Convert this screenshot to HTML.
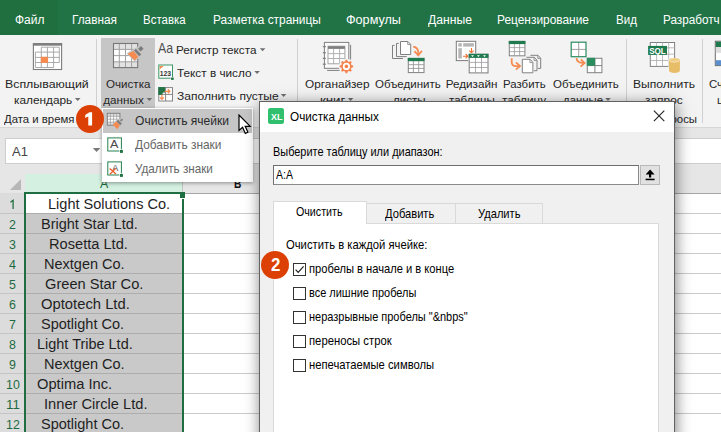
<!DOCTYPE html>
<html><head><meta charset="utf-8"><title>Excel</title>
<style>
*{box-sizing:border-box;margin:0;padding:0}
html,body{width:721px;height:432px;overflow:hidden;background:#fff}
body{font-family:"Liberation Sans",sans-serif;position:relative}
.abs{position:absolute}
.t{position:absolute;white-space:pre;line-height:1;transform-origin:0 0;display:block}
</style></head><body>
<div class="abs" style="left:0;top:0;width:721px;height:35px;background:#217346"></div><div class="abs" style="left:0;top:0;width:58px;height:35px;background:#20703f"></div><span class="t" style="left:14.53px;top:14.00px;font-size:12.30px;color:#fff;transform:scaleX(0.9724);">Файл</span><span class="t" style="left:72.34px;top:14.00px;font-size:12.30px;color:#fff;transform:scaleX(0.9600);">Главная</span><span class="t" style="left:143.37px;top:14.00px;font-size:12.30px;color:#fff;transform:scaleX(0.9333);">Вставка</span><span class="t" style="left:212.73px;top:14.00px;font-size:12.30px;color:#fff;transform:scaleX(0.9664);">Разметка страницы</span><span class="t" style="left:346.27px;top:14.00px;font-size:12.30px;color:#fff;transform:scaleX(1.0269);">Формулы</span><span class="t" style="left:428.00px;top:14.00px;font-size:12.30px;color:#fff;transform:scaleX(0.9886);">Данные</span><span class="t" style="left:497.43px;top:14.00px;font-size:12.30px;color:#fff;transform:scaleX(0.9681);">Рецензирование</span><span class="t" style="left:615.56px;top:14.00px;font-size:12.30px;color:#fff;transform:scaleX(0.9381);">Вид</span><span class="t" style="left:662.65px;top:14.00px;font-size:12.30px;color:#fff;transform:scaleX(0.9517);">Разработч</span><div class="abs" style="left:0;top:35px;width:721px;height:92px;background:#f3f3f3"></div><div class="abs" style="left:0;top:127px;width:721px;height:1px;background:#d6d6d6"></div><div class="abs" style="left:101px;top:38px;width:53.5px;height:70px;background:#c6c6c6"></div><div class="abs" style="left:96px;top:39px;height:84px;width:1px;background:#d0d0d0"></div><div class="abs" style="left:297px;top:39px;height:84px;width:1px;background:#d0d0d0"></div><div class="abs" style="left:626px;top:39px;height:84px;width:1px;background:#d0d0d0"></div><div class="abs" style="left:702px;top:39px;height:84px;width:1px;background:#d0d0d0"></div><span class="t" style="left:5.34px;top:78.00px;font-size:11.70px;color:#262626;transform:scaleX(1.0577);">Всплывающий</span><span class="t" style="left:14.29px;top:94.00px;font-size:11.70px;color:#262626;transform:scaleX(1.0125);">календарь</span><span class="t" style="left:4.20px;top:113.00px;font-size:11.70px;color:#262626;transform:scaleX(0.9722);">Дата и время</span><span class="t" style="left:106.00px;top:78.00px;font-size:11.70px;color:#262626;transform:scaleX(0.9933);">Очистка</span><span class="t" style="left:103.30px;top:94.00px;font-size:11.70px;color:#262626;transform:scaleX(1.0000);">данных</span><span class="t" style="left:176.29px;top:44.00px;font-size:11.70px;color:#262626;transform:scaleX(1.0051);">Регистр текста</span><span class="t" style="left:177.30px;top:67.00px;font-size:11.70px;color:#262626;transform:scaleX(1.0068);">Текст в число</span><span class="t" style="left:177.30px;top:90.00px;font-size:11.70px;color:#262626;transform:scaleX(1.0296);">Заполнить пустые</span><span class="t" style="left:304.60px;top:78.00px;font-size:11.70px;color:#262626;transform:scaleX(1.0111);">Органайзер</span><span class="t" style="left:320.07px;top:94.00px;font-size:11.70px;color:#262626;transform:scaleX(1.1333);">книг</span><span class="t" style="left:374.60px;top:78.00px;font-size:11.70px;color:#262626;transform:scaleX(0.9851);">Объединить</span><span class="t" style="left:392.80px;top:94.00px;font-size:11.70px;color:#262626;transform:scaleX(0.9844);">листы</span><span class="t" style="left:445.70px;top:78.00px;font-size:11.70px;color:#262626;transform:scaleX(1.0000);">Редизайн</span><span class="t" style="left:448.90px;top:94.00px;font-size:11.70px;color:#262626;transform:scaleX(0.9891);">таблицы</span><span class="t" style="left:502.82px;top:78.00px;font-size:11.70px;color:#262626;transform:scaleX(0.9786);">Разбить</span><span class="t" style="left:502.20px;top:94.00px;font-size:11.70px;color:#262626;transform:scaleX(1.0114);">таблицу</span><span class="t" style="left:552.70px;top:78.00px;font-size:11.70px;color:#262626;transform:scaleX(0.9866);">Объединить</span><span class="t" style="left:563.00px;top:94.00px;font-size:11.70px;color:#262626;transform:scaleX(0.9756);">данные</span><span class="t" style="left:632.86px;top:78.00px;font-size:11.70px;color:#262626;transform:scaleX(1.0356);">Выполнить</span><span class="t" style="left:645.00px;top:94.00px;font-size:11.70px;color:#262626;transform:scaleX(1.0216);">запрос</span><span class="t" style="left:650.91px;top:113.00px;font-size:11.70px;color:#262626;transform:scaleX(0.9778);">Запросы</span><span class="t" style="left:709.40px;top:78.00px;font-size:11.70px;color:#262626;transform:scaleX(0.9778);">Счетчик</span><span class="t" style="left:716.50px;top:94.00px;font-size:11.70px;color:#262626;transform:scaleX(0.9778);">цвета</span><span class="t" style="left:158.40px;top:41.00px;font-size:14.50px;color:#505050;transform:scaleX(0.8500);">Aa</span><svg class="abs" style="left:73px;top:96px" width="12" height="8" viewBox="0 0 12 8"><path d="M1.90 1.90 h5.60 l-2.80 3.10 Z" fill="#6e6e6e"/></svg><svg class="abs" style="left:145px;top:96px" width="12" height="8" viewBox="0 0 12 8"><path d="M1.60 1.90 h5.60 l-2.80 3.10 Z" fill="#6e6e6e"/></svg><svg class="abs" style="left:258px;top:47px" width="12" height="8" viewBox="0 0 12 8"><path d="M1.80 1.20 h5.60 l-2.80 3.10 Z" fill="#6e6e6e"/></svg><svg class="abs" style="left:253px;top:70px" width="12" height="8" viewBox="0 0 12 8"><path d="M1.30 1.00 h5.60 l-2.80 3.10 Z" fill="#6e6e6e"/></svg><svg class="abs" style="left:279px;top:92px" width="12" height="8" viewBox="0 0 12 8"><path d="M1.80 1.90 h5.60 l-2.80 3.10 Z" fill="#6e6e6e"/></svg><svg class="abs" style="left:346px;top:96px" width="12" height="8" viewBox="0 0 12 8"><path d="M1.80 1.90 h5.60 l-2.80 3.10 Z" fill="#6e6e6e"/></svg><svg class="abs" style="left:604px;top:96px" width="12" height="8" viewBox="0 0 12 8"><path d="M1.20 1.90 h5.60 l-2.80 3.10 Z" fill="#6e6e6e"/></svg><svg class="abs" style="left:0;top:0" width="721" height="128" viewBox="0 0 721 128"><rect x="33.40" y="43.60" width="28.20" height="25.90" fill="#fff" stroke="#7c7c7c" stroke-width="1.1" /><rect x="32.90" y="43.10" width="29.20" height="2.60" fill="#7f7f7f" /><path d="M41.30 47.20L41.30 67.50" stroke="#a2a2a2" stroke-width="0.9" fill="none"/><path d="M47.40 47.20L47.40 67.50" stroke="#a2a2a2" stroke-width="0.9" fill="none"/><path d="M53.60 47.20L53.60 67.50" stroke="#a2a2a2" stroke-width="0.9" fill="none"/><path d="M35.40 52.10L35.40 67.50" stroke="#a2a2a2" stroke-width="0.9" fill="none"/><path d="M59.30 47.20L59.30 62.50" stroke="#a2a2a2" stroke-width="0.9" fill="none"/><path d="M41.30 47.20L59.30 47.20" stroke="#a2a2a2" stroke-width="0.9" fill="none"/><path d="M35.40 52.10L59.30 52.10" stroke="#a2a2a2" stroke-width="0.9" fill="none"/><path d="M35.40 57.40L59.30 57.40" stroke="#a2a2a2" stroke-width="0.9" fill="none"/><path d="M35.40 62.50L59.30 62.50" stroke="#a2a2a2" stroke-width="0.9" fill="none"/><path d="M35.40 67.50L53.60 67.50" stroke="#a2a2a2" stroke-width="0.9" fill="none"/><rect x="40.80" y="56.80" width="7.30" height="6.10" fill="#f58b50" /><rect x="113.50" y="43.50" width="24.20" height="24.10" fill="#fff" /><rect x="113.50" y="43.50" width="24.20" height="5.90" fill="#e2e2e2" /><rect x="113.50" y="61.80" width="24.20" height="5.80" fill="#e2e2e2" /><path d="M119.30 43.50L119.30 67.60" stroke="#a2a2a2" stroke-width="1" fill="none"/><path d="M125.50 43.50L125.50 67.60" stroke="#a2a2a2" stroke-width="1" fill="none"/><path d="M131.60 43.50L131.60 67.60" stroke="#a2a2a2" stroke-width="1" fill="none"/><path d="M113.50 49.40L137.70 49.40" stroke="#a2a2a2" stroke-width="1" fill="none"/><path d="M113.50 55.60L137.70 55.60" stroke="#a2a2a2" stroke-width="1" fill="none"/><path d="M113.50 61.80L137.70 61.80" stroke="#a2a2a2" stroke-width="1" fill="none"/><rect x="113.50" y="43.50" width="24.20" height="24.10" fill="none" stroke="#777" stroke-width="1.1" /><path d="M126.6 53.6 L135.9 47.4 L141 45.2 L144.4 48.8 L142 52 L142.6 55 L134.8 61.6 Z" fill="#c6c6c6" /><path d="M127.70 53.80 L133.50 51.00 L138.30 56.90 L134.50 60.20Z" fill="#f58b50" /><path d="M133.90 50.50 L135.90 48.80 L141.30 54.40 L139.10 56.20Z" fill="#7d7d7d" /><path d="M138.00 48.80 L141.00 46.00 L143.60 48.70 L140.60 51.50Z" fill="#7c7c7c" /><rect x="158.80" y="65.00" width="13.70" height="13.20" fill="#fff" stroke="#3a9666" stroke-width="1" /><path d="M159.6 66 H163.8 L159.6 69.6Z" fill="#f58b50" /><text x="159.7" y="76.2" font-family="Liberation Sans,sans-serif" font-weight="bold" font-size="6.3" fill="#333" textLength="11.4" lengthAdjust="spacingAndGlyphs">123</text><rect x="170.60" y="77.00" width="3.40" height="3.20" fill="#f3f3f3" /><rect x="171.10" y="77.50" width="2.60" height="2.40" fill="#217346" /><rect x="158.80" y="87.60" width="13.70" height="13.40" fill="#fff" stroke="#858585" stroke-width="1" /><path d="M165.60 87.60L165.60 101.00" stroke="#858585" stroke-width="1" fill="none"/><path d="M158.80 94.40L172.50 94.40" stroke="#858585" stroke-width="1" fill="none"/><rect x="158.30" y="87.10" width="6.80" height="5.50" fill="#217346" /><rect x="158.30" y="92.00" width="4.30" height="2.90" fill="#217346" /><path d="M164.6 91.3 H169.6 M167.8 89.3 L169.9 91.3 L167.8 93.3" fill="none" stroke="#f58b50" stroke-width="1.2" /><path d="M161.9 94.6 V99.2 M159.9 97.4 L161.9 99.5 L163.9 97.4" fill="none" stroke="#f58b50" stroke-width="1.2" /><path d="M327.10 70.40L339.60 70.40" stroke="#808080" stroke-width="1" fill="none"/><path d="M350.60 44.80L350.60 59.60" stroke="#808080" stroke-width="1" fill="none"/><rect x="324.40" y="42.40" width="24.40" height="25.90" fill="#fafafa" stroke="#808080" stroke-width="1" /><path d="M322.80 46.60L325.90 46.60" stroke="#808080" stroke-width="1.2" fill="none"/><path d="M322.80 52.70L325.90 52.70" stroke="#808080" stroke-width="1.2" fill="none"/><path d="M322.80 58.40L325.90 58.40" stroke="#808080" stroke-width="1.2" fill="none"/><path d="M322.80 64.20L325.90 64.20" stroke="#808080" stroke-width="1.2" fill="none"/><rect x="328.00" y="46.20" width="16.90" height="17.60" fill="#fff" stroke="#999" stroke-width="0.9" /><rect x="328.00" y="46.20" width="16.90" height="2.70" fill="#7f7f7f" /><path d="M333.60 48.90L333.60 63.80" stroke="#aaa" stroke-width="0.9" fill="none"/><path d="M339.60 48.90L339.60 63.80" stroke="#aaa" stroke-width="0.9" fill="none"/><path d="M328.00 53.60L344.90 53.60" stroke="#aaa" stroke-width="0.9" fill="none"/><path d="M328.00 58.50L344.90 58.50" stroke="#aaa" stroke-width="0.9" fill="none"/><circle cx="346.4" cy="66.4" r="7.6" fill="#f3f3f3"/><path d="M345.24 61.23 L345.52 59.66 L347.28 59.66 L347.56 61.23 L349.24 61.92 L350.54 61.01 L351.79 62.26 L350.88 63.56 L351.57 65.24 L353.14 65.52 L353.14 67.28 L351.57 67.56 L350.88 69.24 L351.79 70.54 L350.54 71.79 L349.24 70.88 L347.56 71.57 L347.28 73.14 L345.52 73.14 L345.24 71.57 L343.56 70.88 L342.26 71.79 L341.01 70.54 L341.92 69.24 L341.23 67.56 L339.66 67.28 L339.66 65.52 L341.23 65.24 L341.92 63.56 L341.01 62.26 L342.26 61.01 L343.56 61.92Z" fill="#f4814a" /><circle cx="346.4" cy="66.4" r="3.6" fill="#fff"/><circle cx="346.4" cy="66.4" r="1.8" fill="#f4814a"/><path d="M394.6 45.4 H392.5 V58.5 H403" fill="none" stroke="#808080" stroke-width="1" /><path d="M398.8 43.4 H396.5 V56.6 H406.7" fill="none" stroke="#808080" stroke-width="1" /><path d="M400.5 41.5 H407.9 L410.7 44.3 V54.5 H400.5Z" fill="#fff" stroke="#808080" stroke-width="1" /><path d="M407.7 41.7 V44.5 H410.5" fill="none" stroke="#808080" stroke-width="0.8" /><path d="M413.2 46.6 C417 47 418.6 50 418.3 54.6" fill="none" stroke="#f58b50" stroke-width="1.8" /><path d="M414.4 51.2 L418.3 55.4 L421.9 50.8" fill="none" stroke="#f58b50" stroke-width="1.8" /><rect x="407.60" y="57.50" width="17.10" height="15.80" fill="#f3f3f3" /><rect x="408.30" y="58.40" width="15.70" height="14.20" fill="#fff" stroke="#808080" stroke-width="1" /><path d="M413.40 58.40L413.40 72.60" stroke="#8c8c8c" stroke-width="0.8" fill="none"/><path d="M418.70 58.40L418.70 72.60" stroke="#8c8c8c" stroke-width="0.8" fill="none"/><path d="M408.30 64.70L424.00 64.70" stroke="#8c8c8c" stroke-width="0.8" fill="none"/><path d="M408.30 68.40L424.00 68.40" stroke="#8c8c8c" stroke-width="0.8" fill="none"/><rect x="407.80" y="57.90" width="16.70" height="3.30" fill="#1f7a4d" /><rect x="456.30" y="41.30" width="19.40" height="19.30" fill="#fff" stroke="#7a7a7a" stroke-width="1" /><rect x="458.30" y="43.20" width="3.50" height="3.40" fill="#b5b5b5" /><rect x="463.20" y="43.20" width="10.70" height="3.40" fill="#b5b5b5" /><rect x="458.30" y="48.20" width="3.50" height="10.30" fill="#b5b5b5" /><path d="M471.5 48 V52.3 M469.3 50.6 L471.5 52.8 L473.7 50.6" fill="none" stroke="#f07030" stroke-width="1.1" /><path d="M463 56.2 H467.4 M465.6 54 L467.9 56.2 L465.6 58.4" fill="none" stroke="#f07030" stroke-width="1.1" /><rect x="468.20" y="53.40" width="20.60" height="20.20" fill="#f3f3f3" /><rect x="469.20" y="54.30" width="18.80" height="18.60" fill="#fff" stroke="#7a7a7a" stroke-width="1" /><path d="M475.50 54.30L475.50 72.90" stroke="#9a9a9a" stroke-width="0.8" fill="none"/><path d="M481.50 54.30L481.50 72.90" stroke="#9a9a9a" stroke-width="0.8" fill="none"/><path d="M469.20 62.40L488.00 62.40" stroke="#9a9a9a" stroke-width="0.8" fill="none"/><path d="M469.20 67.50L488.00 67.50" stroke="#9a9a9a" stroke-width="0.8" fill="none"/><rect x="468.70" y="53.80" width="19.80" height="4.10" fill="#1f7a4d" /><path d="M471.0 55.2 H474.0 L472.5 56.9Z" fill="#fff" /><path d="M476.9 55.2 H479.9 L478.4 56.9Z" fill="#fff" /><path d="M483.0 55.2 H486.0 L484.5 56.9Z" fill="#fff" /><rect x="509.30" y="41.40" width="15.60" height="14.40" fill="#fff" stroke="#808080" stroke-width="1" /><path d="M514.40 41.40L514.40 55.80" stroke="#999" stroke-width="0.8" fill="none"/><path d="M519.60 41.40L519.60 55.80" stroke="#999" stroke-width="0.8" fill="none"/><path d="M509.30 47.60L524.90 47.60" stroke="#999" stroke-width="0.8" fill="none"/><path d="M509.30 51.60L524.90 51.60" stroke="#999" stroke-width="0.8" fill="none"/><rect x="508.80" y="40.90" width="16.60" height="3.20" fill="#1f7a4d" /><path d="M511.7 58.2 V62 C511.7 65 513.5 66.1 516 66.1 H519" fill="none" stroke="#f58b50" stroke-width="1.8" /><path d="M515.9 62.4 L520 66.1 L515.9 69.6" fill="none" stroke="#f58b50" stroke-width="1.8" /><path d="M530.4 55.3 H538 L540.7 58.2 V68.4 H538" fill="none" stroke="#808080" stroke-width="1" /><path d="M537.8 55.5 V58.4 H540.5" fill="none" stroke="#808080" stroke-width="0.8" /><path d="M526.4 57.3 H534.3 L537 60.3 V70.7 H534" fill="none" stroke="#808080" stroke-width="1" /><path d="M534.1 57.5 V60.5 H536.8" fill="none" stroke="#808080" stroke-width="0.8" /><path d="M522.3 59.3 H530.1 L532.9 62.4 V72.8 H522.3Z" fill="#fff" stroke="#808080" stroke-width="1" /><path d="M529.9 59.5 V62.6 H532.7" fill="none" stroke="#808080" stroke-width="0.8" /><rect x="571.20" y="42.20" width="14.80" height="14.50" fill="#fff" /><path d="M578.70 42.20L578.70 56.70" stroke="#a0a0a0" stroke-width="1" fill="none"/><path d="M571.20 49.40L586.00 49.40" stroke="#a0a0a0" stroke-width="1" fill="none"/><rect x="571.20" y="42.20" width="14.80" height="14.50" fill="none" stroke="#2a8c5f" stroke-width="1.2" /><path d="M576.6 58 C576.6 61.5 579 62.9 583.4 62.9" fill="none" stroke="#f58b50" stroke-width="1.8" /><path d="M580.8 59.4 L584.6 63 L580.6 66.6" fill="none" stroke="#f58b50" stroke-width="1.8" /><rect x="587.30" y="58.30" width="14.60" height="14.40" fill="#fff" stroke="#808080" stroke-width="1" /><path d="M594.90 58.30L594.90 72.70" stroke="#808080" stroke-width="1" fill="none"/><path d="M587.30 65.60L601.90 65.60" stroke="#808080" stroke-width="1" fill="none"/><rect x="586.80" y="57.80" width="8.30" height="8.00" fill="#2a8c5f" /><rect x="650.30" y="42.50" width="24.30" height="23.90" fill="#fff" stroke="#808080" stroke-width="1" /><path d="M656.60 42.50L656.60 66.40" stroke="#a8a8a8" stroke-width="0.8" fill="none"/><path d="M662.50 42.50L662.50 66.40" stroke="#a8a8a8" stroke-width="0.8" fill="none"/><path d="M668.70 42.50L668.70 66.40" stroke="#a8a8a8" stroke-width="0.8" fill="none"/><path d="M650.30 47.80L674.60 47.80" stroke="#a8a8a8" stroke-width="0.8" fill="none"/><path d="M650.30 54.20L674.60 54.20" stroke="#a8a8a8" stroke-width="0.8" fill="none"/><path d="M650.30 60.50L674.60 60.50" stroke="#a8a8a8" stroke-width="0.8" fill="none"/><rect x="648.10" y="45.90" width="18.90" height="9.00" fill="#1f7a4d" /><text x="649.2" y="53.9" font-family="Liberation Sans,sans-serif" font-weight="bold" font-size="9.4" fill="#fff" textLength="16.6" lengthAdjust="spacingAndGlyphs">SQL</text><path d="M668.4 59 V71 A5.9 2.2 0 0 0 680.4 71 V59Z" fill="#f3f3f3" /><path d="M669 60 V70.8 A5.45 2.1 0 0 0 679.9 70.8 V60Z" fill="#e7bd67" /><ellipse cx="674.45" cy="60" rx="5.45" ry="2.1" fill="#efcd84"/><path d="M669.2 60.4 A5.3 2 0 0 0 679.7 60.4" fill="none" stroke="#fbefd4" stroke-width="0.7" /><rect x="715.30" y="41.20" width="14.70" height="24.40" fill="#fff" stroke="#6a6a6a" stroke-width="1" /><rect x="715.80" y="41.70" width="14.20" height="5.30" fill="#1f7a4d" /><rect x="715.80" y="47.00" width="14.20" height="5.90" fill="#dedede" /><rect x="715.80" y="60.20" width="14.20" height="5.00" fill="#5b8fd0" /></svg><div class="abs" style="left:0;top:128px;width:721px;height:46px;background:#e6e6e6"></div><div class="abs" style="left:5px;top:138px;width:100px;height:26px;background:#fff;border:1px solid #cdcdcd"></div><div class="abs" style="left:180px;top:138px;width:545px;height:26px;background:#fff;border:1px solid #cdcdcd"></div><span class="t" style="left:12.10px;top:146.00px;font-size:12.40px;color:#444;transform:scaleX(1.0467);">A1</span><svg class="abs" style="left:91px;top:147px" width="12" height="8" viewBox="0 0 12 8"><path d="M1.80 1.00 h7.50 l-3.75 4.00 Z" fill="#777"/></svg><div class="abs" style="left:0;top:174px;width:721px;height:19px;background:#e6e6e6"></div><div class="abs" style="left:0;top:193px;width:721px;height:1px;background:#a6a6a6"></div><div class="abs" style="left:25px;top:174px;width:157px;height:19px;background:#d3f0e0"></div><div class="abs" style="left:182px;top:174px;width:1px;height:19px;background:#c4c4c4"></div><div class="abs" style="left:10.4px;top:178.5px;width:0;height:0;border-left:11.7px solid transparent;border-bottom:11.3px solid #b7b7b7"></div><span class="t" style="left:100.10px;top:178.00px;font-size:12.40px;color:#1e6b41;transform:scaleX(1.0000);">A</span><span class="t" style="left:233.78px;top:178.00px;font-size:12.40px;color:#111;font-weight:bold;transform:scaleX(0.8250);">B</span><div class="abs" style="left:0;top:193px;width:24.5px;height:239px;background:#dcdcdc"></div><div class="abs" style="left:24.5px;top:193px;width:159px;height:239px;background:#c9c9c9"></div><div class="abs" style="left:26px;top:194px;width:156px;height:18.5px;background:#fff"></div><div class="abs" style="left:0;top:213.0px;width:24.5px;height:1px;background:#c4c4c4"></div><div class="abs" style="left:26px;top:213.0px;width:156px;height:1px;background:#adadad"></div><div class="abs" style="left:184px;top:213.0px;width:537px;height:1px;background:#cbcbcb"></div><svg class="abs" style="left:6px;top:196px" width="14" height="16" viewBox="6 196 14 16"><path d="M10.5 202.3 L13.1 200.3 V209" stroke="#1e6b41" stroke-width="1.25" fill="none"/></svg><div class="abs" style="left:0;top:233.0px;width:24.5px;height:1px;background:#c4c4c4"></div><div class="abs" style="left:26px;top:233.0px;width:156px;height:1px;background:#adadad"></div><div class="abs" style="left:184px;top:233.0px;width:537px;height:1px;background:#cbcbcb"></div><span class="t" style="left:9.05px;top:218.00px;font-size:13.00px;color:#1e6b41;transform:scaleX(0.9538);">2</span><div class="abs" style="left:0;top:253.0px;width:24.5px;height:1px;background:#c4c4c4"></div><div class="abs" style="left:26px;top:253.0px;width:156px;height:1px;background:#adadad"></div><div class="abs" style="left:184px;top:253.0px;width:537px;height:1px;background:#cbcbcb"></div><span class="t" style="left:9.05px;top:238.00px;font-size:13.00px;color:#1e6b41;transform:scaleX(0.9538);">3</span><div class="abs" style="left:0;top:273.0px;width:24.5px;height:1px;background:#c4c4c4"></div><div class="abs" style="left:26px;top:273.0px;width:156px;height:1px;background:#adadad"></div><div class="abs" style="left:184px;top:273.0px;width:537px;height:1px;background:#cbcbcb"></div><span class="t" style="left:9.05px;top:258.00px;font-size:13.00px;color:#1e6b41;transform:scaleX(0.9538);">4</span><div class="abs" style="left:0;top:293.0px;width:24.5px;height:1px;background:#c4c4c4"></div><div class="abs" style="left:26px;top:293.0px;width:156px;height:1px;background:#adadad"></div><div class="abs" style="left:184px;top:293.0px;width:537px;height:1px;background:#cbcbcb"></div><span class="t" style="left:9.05px;top:278.00px;font-size:13.00px;color:#1e6b41;transform:scaleX(0.9538);">5</span><div class="abs" style="left:0;top:313.0px;width:24.5px;height:1px;background:#c4c4c4"></div><div class="abs" style="left:26px;top:313.0px;width:156px;height:1px;background:#adadad"></div><div class="abs" style="left:184px;top:313.0px;width:537px;height:1px;background:#cbcbcb"></div><span class="t" style="left:9.05px;top:298.00px;font-size:13.00px;color:#1e6b41;transform:scaleX(0.9538);">6</span><div class="abs" style="left:0;top:333.0px;width:24.5px;height:1px;background:#c4c4c4"></div><div class="abs" style="left:26px;top:333.0px;width:156px;height:1px;background:#adadad"></div><div class="abs" style="left:184px;top:333.0px;width:537px;height:1px;background:#cbcbcb"></div><span class="t" style="left:9.05px;top:318.00px;font-size:13.00px;color:#1e6b41;transform:scaleX(0.9538);">7</span><div class="abs" style="left:0;top:353.0px;width:24.5px;height:1px;background:#c4c4c4"></div><div class="abs" style="left:26px;top:353.0px;width:156px;height:1px;background:#adadad"></div><div class="abs" style="left:184px;top:353.0px;width:537px;height:1px;background:#cbcbcb"></div><span class="t" style="left:9.05px;top:338.00px;font-size:13.00px;color:#1e6b41;transform:scaleX(0.9538);">8</span><div class="abs" style="left:0;top:373.0px;width:24.5px;height:1px;background:#c4c4c4"></div><div class="abs" style="left:26px;top:373.0px;width:156px;height:1px;background:#adadad"></div><div class="abs" style="left:184px;top:373.0px;width:537px;height:1px;background:#cbcbcb"></div><span class="t" style="left:9.05px;top:358.00px;font-size:13.00px;color:#1e6b41;transform:scaleX(0.9538);">9</span><div class="abs" style="left:0;top:393.0px;width:24.5px;height:1px;background:#c4c4c4"></div><div class="abs" style="left:26px;top:393.0px;width:156px;height:1px;background:#adadad"></div><div class="abs" style="left:184px;top:393.0px;width:537px;height:1px;background:#cbcbcb"></div><span class="t" style="left:5.60px;top:378.00px;font-size:13.00px;color:#1e6b41;transform:scaleX(0.9538);">10</span><div class="abs" style="left:0;top:413.0px;width:24.5px;height:1px;background:#c4c4c4"></div><div class="abs" style="left:26px;top:413.0px;width:156px;height:1px;background:#adadad"></div><div class="abs" style="left:184px;top:413.0px;width:537px;height:1px;background:#cbcbcb"></div><span class="t" style="left:5.60px;top:398.00px;font-size:13.00px;color:#1e6b41;transform:scaleX(1.0222);">11</span><div class="abs" style="left:0;top:433.0px;width:24.5px;height:1px;background:#c4c4c4"></div><div class="abs" style="left:26px;top:433.0px;width:156px;height:1px;background:#adadad"></div><div class="abs" style="left:184px;top:433.0px;width:537px;height:1px;background:#cbcbcb"></div><span class="t" style="left:5.60px;top:418.00px;font-size:13.00px;color:#1e6b41;transform:scaleX(0.9538);">12</span><span class="t" style="left:48.46px;top:196.00px;font-size:15.40px;color:#1f1f1f;transform:scaleX(0.9449);">Light Solutions Co.</span><span class="t" style="left:40.66px;top:216.00px;font-size:15.40px;color:#1f1f1f;transform:scaleX(0.9426);">Bright Star Ltd.</span><span class="t" style="left:49.05px;top:236.00px;font-size:15.40px;color:#1f1f1f;transform:scaleX(0.9506);">Rosetta Ltd.</span><span class="t" style="left:44.46px;top:256.00px;font-size:15.40px;color:#1f1f1f;transform:scaleX(0.9422);">Nextgen Co.</span><span class="t" style="left:44.95px;top:276.00px;font-size:15.40px;color:#1f1f1f;transform:scaleX(0.9505);">Green Star Co.</span><span class="t" style="left:40.54px;top:296.00px;font-size:15.40px;color:#1f1f1f;transform:scaleX(0.9611);">Optotech Ltd.</span><span class="t" style="left:40.56px;top:316.00px;font-size:15.40px;color:#1f1f1f;transform:scaleX(0.9419);">Spotlight Co.</span><span class="t" style="left:36.56px;top:336.00px;font-size:15.40px;color:#1f1f1f;transform:scaleX(0.9400);">Light Tribe Ltd.</span><span class="t" style="left:44.46px;top:356.00px;font-size:15.40px;color:#1f1f1f;transform:scaleX(0.9422);">Nextgen Co.</span><span class="t" style="left:36.55px;top:376.00px;font-size:15.40px;color:#1f1f1f;transform:scaleX(0.9545);">Optima Inc.</span><span class="t" style="left:44.05px;top:396.00px;font-size:15.40px;color:#1f1f1f;transform:scaleX(0.9528);">Inner Circle Ltd.</span><span class="t" style="left:40.56px;top:416.00px;font-size:15.40px;color:#1f1f1f;transform:scaleX(0.9419);">Spotlight Co.</span><div class="abs" style="left:24px;top:192px;width:160px;height:2px;background:#1e6e42"></div><div class="abs" style="left:24px;top:192px;width:2px;height:240px;background:#1e6e42"></div><div class="abs" style="left:182px;top:192px;width:2px;height:240px;background:#1e6e42"></div><div class="abs" style="left:180px;top:192px;width:5px;height:7px;background:#fff"></div><div class="abs" style="left:180px;top:192px;width:5px;height:6px;background:#1e6e42"></div><div class="abs" style="left:102px;top:108px;width:151px;height:74px;background:#fff;box-shadow:0 1px 4px rgba(0,0,0,.4)"></div><div class="abs" style="left:103px;top:109px;width:149px;height:23.6px;background:#c6c6c6"></div><span class="t" style="left:135.30px;top:115.00px;font-size:12.70px;color:#2b2b2b;transform:scaleX(0.9500);">Очистить ячейки</span><span class="t" style="left:134.70px;top:139.00px;font-size:12.70px;color:#666;transform:scaleX(0.9385);">Добавить знаки</span><span class="t" style="left:135.00px;top:163.00px;font-size:12.70px;color:#666;transform:scaleX(0.9214);">Удалить знаки</span><svg class="abs" style="left:0;top:100px" width="300" height="100" viewBox="0 100 300 100"><rect x="107.30" y="113.30" width="12.60" height="11.90" fill="#fff" /><rect x="107.30" y="113.30" width="12.60" height="3.00" fill="#e0e0e0" /><rect x="107.30" y="122.20" width="12.60" height="3.00" fill="#e0e0e0" /><path d="M110.40 113.30L110.40 125.20" stroke="#999" stroke-width="0.7" fill="none"/><path d="M113.60 113.30L113.60 125.20" stroke="#999" stroke-width="0.7" fill="none"/><path d="M116.70 113.30L116.70 125.20" stroke="#999" stroke-width="0.7" fill="none"/><path d="M107.30 116.30L119.90 116.30" stroke="#999" stroke-width="0.7" fill="none"/><path d="M107.30 119.20L119.90 119.20" stroke="#999" stroke-width="0.7" fill="none"/><path d="M107.30 122.20L119.90 122.20" stroke="#999" stroke-width="0.7" fill="none"/><rect x="107.30" y="113.30" width="12.60" height="11.90" fill="none" stroke="#777" stroke-width="0.9" /><path d="M112.2 124.3 L116.6 119.5 L121.2 118 L123.6 120 L122.2 122.3 L118.4 129.6 Z" fill="#c6c6c6" /><path d="M112.6 124.6 L116.5 121.4 L120 125 L117.4 129.2 Z" fill="#f58b50" /><path d="M116.4 121.2 L118 119.8 L121.8 123.6 L120.3 125.2 Z" fill="#7d7d7d" /><path d="M119.6 120.2 L121.9 118.4 L123.2 119.8 L121.2 121.8 Z" fill="#8a8a8a" /><rect x="107.80" y="137.90" width="13.60" height="13.10" fill="#fff" stroke="#23824f" stroke-width="1" /><text x="110" y="148.4" font-family="Liberation Sans,sans-serif" font-size="11.8" fill="#4a4a4a" textLength="8.4" lengthAdjust="spacingAndGlyphs">A</text><rect x="119.40" y="149.40" width="3.90" height="3.90" fill="#fff" /><rect x="120.00" y="150.00" width="2.90" height="2.90" fill="#217346" /><rect x="107.80" y="161.90" width="13.60" height="13.10" fill="#fff" stroke="#23824f" stroke-width="1" /><text x="112.2" y="170.6" font-family="Liberation Sans,sans-serif" font-size="9" fill="#4a4a4a" textLength="6" lengthAdjust="spacingAndGlyphs">A</text><path d="M109.7 168.6 L116 174 M115.8 168.4 L109.9 174.2" fill="none" stroke="#e8602c" stroke-width="1.3" /><rect x="119.40" y="173.40" width="3.90" height="3.90" fill="#fff" /><rect x="120.00" y="174.00" width="2.90" height="2.90" fill="#217346" /></svg><div class="abs" style="left:259px;top:101px;width:416px;height:340px;background:#f0f0f0;border:1px solid #626262;box-shadow:1px 3px 14px 0 rgba(0,0,0,.5)"></div><div class="abs" style="left:260px;top:102px;width:414px;height:29.7px;background:#fff"></div><div class="abs" style="left:268px;top:108px;width:16px;height:15.8px;background:#31c06d;border-radius:2.2px"></div><span class="t" style="left:270.80px;top:113.00px;font-size:9.00px;color:#fff;font-weight:bold;transform:scaleX(0.9909);">XL</span><span class="t" style="left:289.50px;top:111.00px;font-size:12.30px;color:#000;transform:scaleX(0.9548);">Очистка данных</span><svg class="abs" style="left:652px;top:109px" width="14" height="14" viewBox="0 0 14 14"><path d="M1.9 1.7 L12.3 12.1 M12.3 1.7 L1.9 12.1" stroke="#222" stroke-width="1.1" fill="none"/></svg><span class="t" style="left:272.90px;top:146.00px;font-size:12.20px;color:#000;transform:scaleX(0.8968);">Выберите таблицу или диапазон:</span><div class="abs" style="left:273px;top:165px;width:366px;height:19.5px;background:#fff;border:1px solid #6e6e6e;border-bottom-color:#8a8a8a;border-right-color:#8a8a8a"></div><span class="t" style="left:275.80px;top:169.00px;font-size:12.20px;color:#000;transform:scaleX(0.8600);">A:A</span><div class="abs" style="left:640px;top:165px;width:20px;height:19.5px;background:#e1e1e1;border:1px solid #b9b9b9"></div><svg class="abs" style="left:643px;top:167px" width="14" height="16" viewBox="0 0 14 16"><path d="M7.1 2.6 L2.6 7.6 H6 V10.6 H8.2 V7.6 H11.6 Z" fill="#000"/><rect x="2.6" y="11.7" width="9" height="1.5" fill="#000"/></svg><div class="abs" style="left:273px;top:223px;width:386px;height:215px;background:#fff;border:1px solid #dadada"></div><div class="abs" style="left:366px;top:203px;width:90px;height:20px;background:#f0f0f0;border:1px solid #d9d9d9;border-bottom:0"></div><div class="abs" style="left:455px;top:203px;width:88px;height:20px;background:#f0f0f0;border:1px solid #d9d9d9;border-bottom:0"></div><div class="abs" style="left:273px;top:201px;width:94px;height:23px;background:#fff;border:1px solid #d9d9d9;border-bottom:0"></div><span class="t" style="left:296.20px;top:206.00px;font-size:12.20px;color:#000;transform:scaleX(0.8755);">Очистить</span><span class="t" style="left:384.70px;top:208.00px;font-size:12.20px;color:#000;transform:scaleX(0.9148);">Добавить</span><span class="t" style="left:478.00px;top:208.00px;font-size:12.20px;color:#000;transform:scaleX(0.9130);">Удалить</span><span class="t" style="left:286.40px;top:239.00px;font-size:12.20px;color:#000;transform:scaleX(0.9237);">Очистить в каждой ячейке:</span><div class="abs" style="left:293px;top:263.0px;width:13px;height:13px;background:#fff;border:1px solid #333"></div><span class="t" style="left:308.99px;top:263.00px;font-size:12.20px;color:#000;transform:scaleX(0.9140);">пробелы в начале и в конце</span><div class="abs" style="left:293px;top:287.0px;width:13px;height:13px;background:#fff;border:1px solid #333"></div><span class="t" style="left:309.00px;top:287.00px;font-size:12.20px;color:#000;transform:scaleX(0.9000);">все лишние пробелы</span><div class="abs" style="left:293px;top:311.0px;width:13px;height:13px;background:#fff;border:1px solid #333"></div><span class="t" style="left:309.00px;top:311.00px;font-size:12.20px;color:#000;transform:scaleX(0.9017);">неразрывные пробелы "&amp;nbps"</span><div class="abs" style="left:293px;top:335.0px;width:13px;height:13px;background:#fff;border:1px solid #333"></div><span class="t" style="left:308.97px;top:335.00px;font-size:12.20px;color:#000;transform:scaleX(0.9261);">переносы строк</span><div class="abs" style="left:293px;top:359.0px;width:13px;height:13px;background:#fff;border:1px solid #333"></div><span class="t" style="left:308.98px;top:359.00px;font-size:12.20px;color:#000;transform:scaleX(0.9224);">непечатаемые символы</span><svg class="abs" style="left:293px;top:263px" width="13" height="13" viewBox="0 0 13 13"><path d="M2.6 6.6 L5.2 9.4 L10.6 3.4" stroke="#222" stroke-width="1.2" fill="none"/></svg><div class="abs" style="left:76.0px;top:104.9px;width:28px;height:28px;border-radius:50%;background:#dc4005"></div><div class="abs" style="left:260.8px;top:250.7px;width:28px;height:28px;border-radius:50%;background:#dc4005"></div><svg class="abs" style="left:80px;top:108px" width="20" height="22" viewBox="80 108 20 22"><path d="M92.1 112.3 V125.4 H88.3 V116.5 L85.2 117.9 V114.9 L89.4 112.3Z" fill="#fff"/></svg><span class="t" style="left:270.60px;top:256.00px;font-size:18.40px;color:#fff;font-weight:bold;transform:scaleX(0.9200);">2</span><svg class="abs" style="left:237.5px;top:113.5px" width="14" height="21" viewBox="0 0 14 21"><path d="M1 1 L1 16.5 L4.6 13.2 L7.3 19.4 L9.9 18.3 L7.2 12.3 L12.2 12.3 Z" fill="#fff" stroke="#000" stroke-width="1.2"/></svg>
</body></html>
